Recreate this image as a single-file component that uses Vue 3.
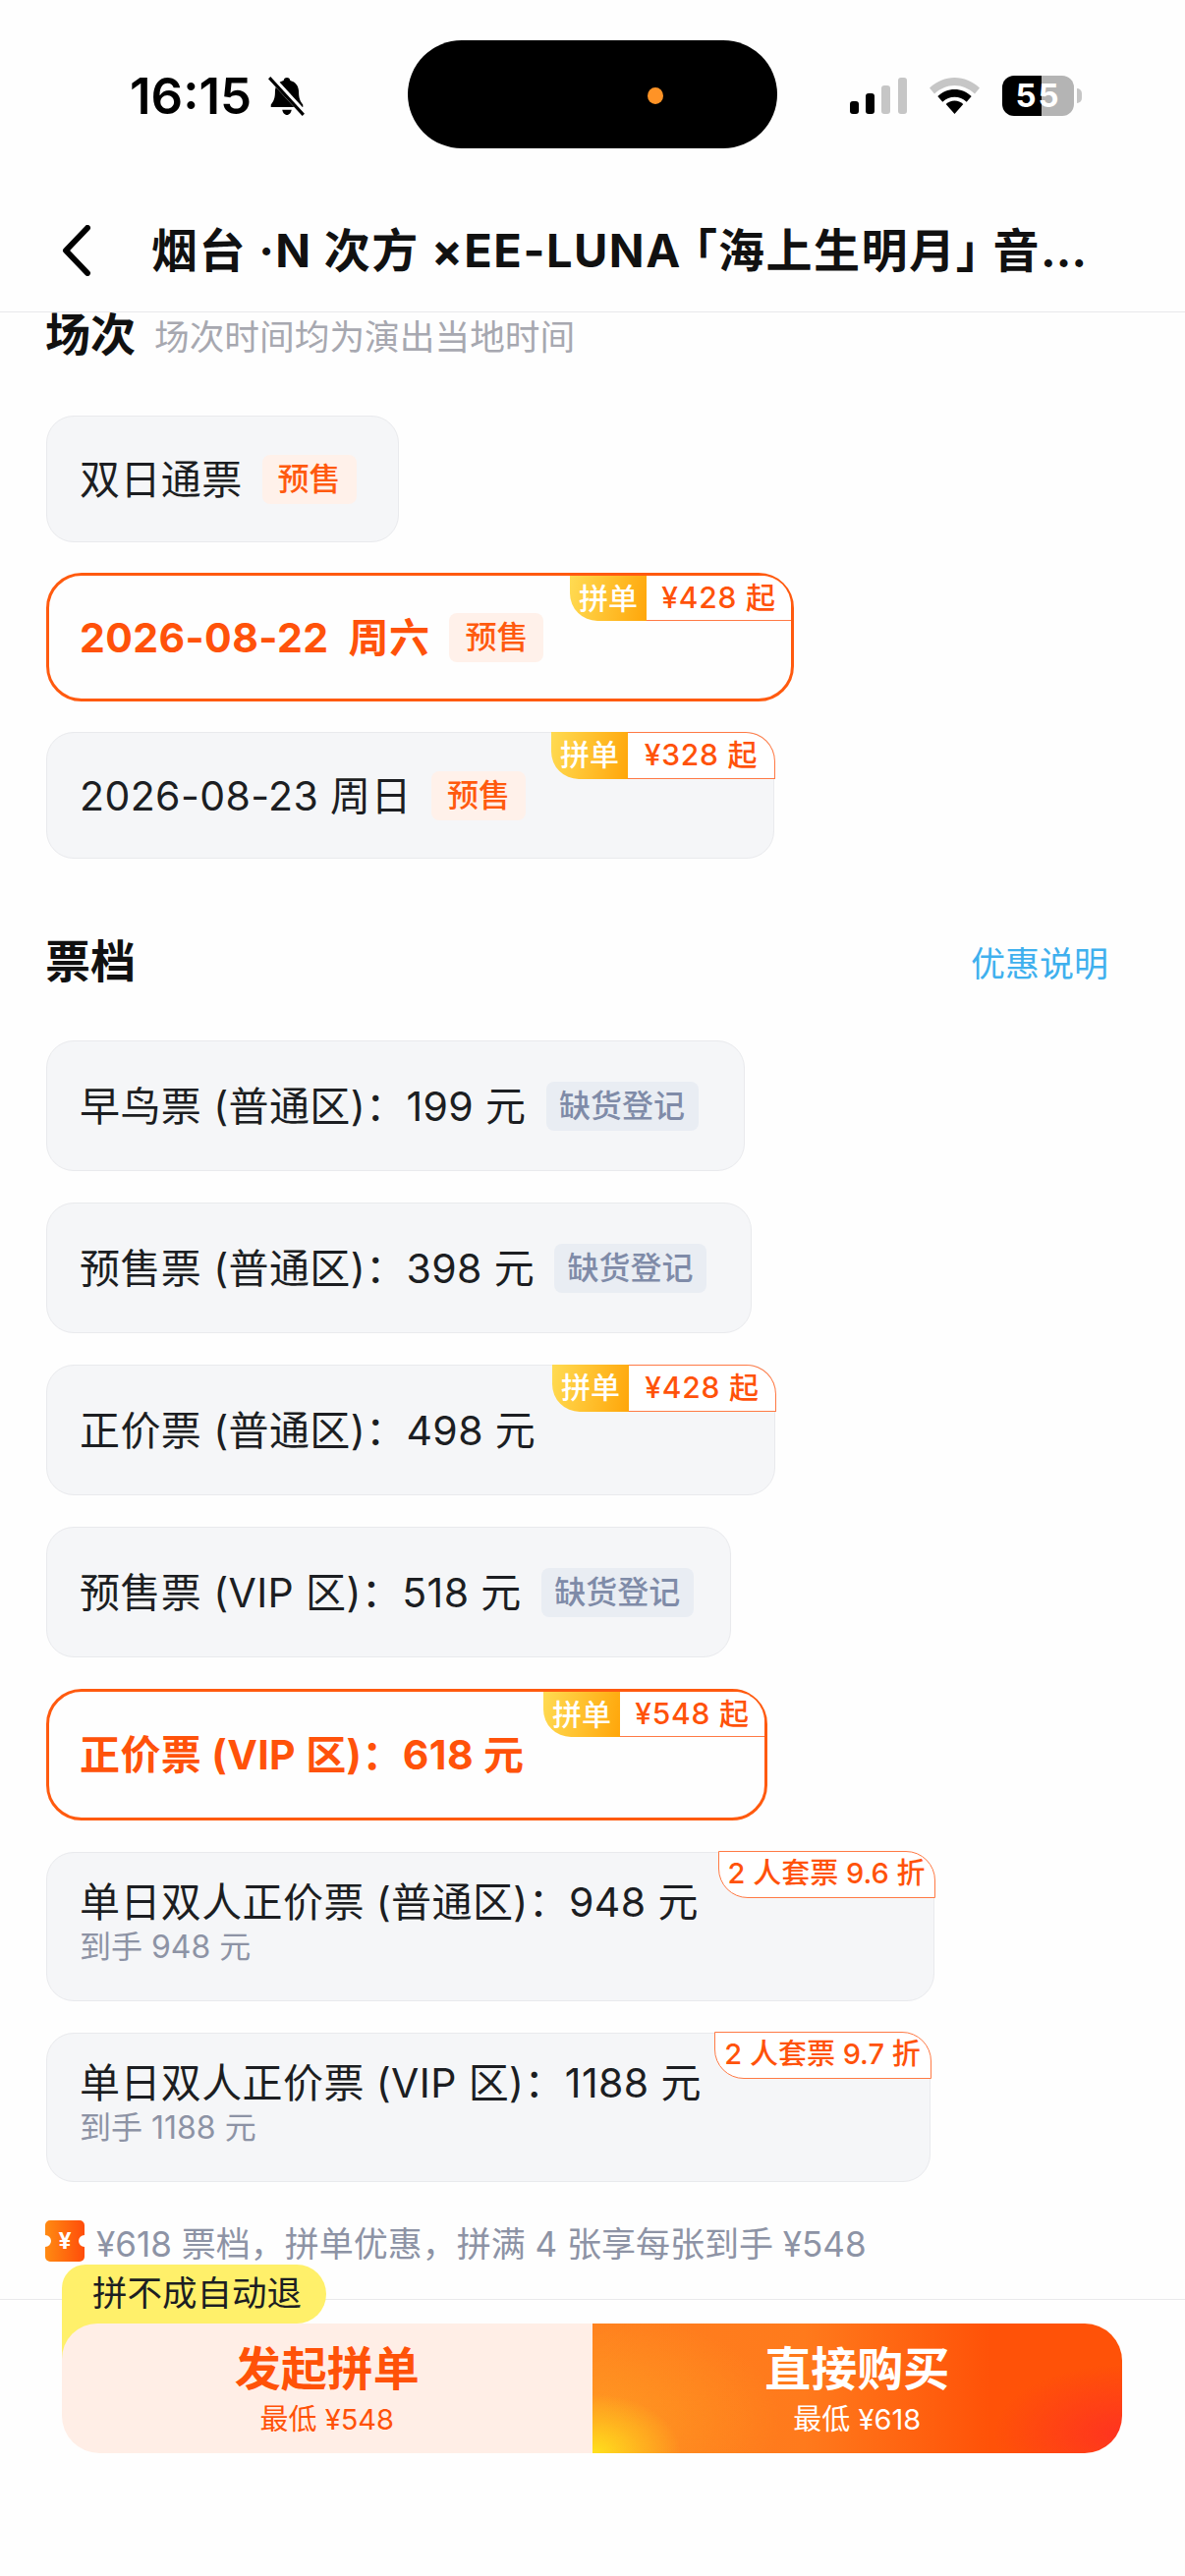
<script setup>
const sessions = [
  { name: '双日通票', width: 359, badge: '预售' },
  { name: '2026-08-22  周六', width: 761, badge: '预售', selected: true, join: '¥428 起' },
  { name: '2026-08-23 周日', width: 741, badge: '预售', join: '¥328 起' },
]
const tickets = [
  { name: '早鸟票 (普通区)：199 元', width: 711, badge: '缺货登记' },
  { name: '预售票 (普通区)：398 元', width: 718, badge: '缺货登记' },
  { name: '正价票 (普通区)：498 元', width: 742, join: '¥428 起' },
  { name: '预售票 (VIP 区)：518 元', width: 697, badge: '缺货登记' },
  { name: '正价票 (VIP 区)：618 元', width: 734, selected: true, join: '¥548 起' },
  { name: '单日双人正价票 (普通区)：948 元', width: 904, sub: '到手 948 元', pack: '2 人套票 9.6 折' },
  { name: '单日双人正价票 (VIP 区)：1188 元', width: 900, sub: '到手 1188 元', pack: '2 人套票 9.7 折' },
]
</script>

<template>
  <div class="page">
    <header class="top">
      <div class="status">
        <div class="status-left">
          <span class="time">16:15</span>
          <svg class="bell" viewBox="0 0 40 40" width="42" height="42">
            <path d="M20 2c1.800 0 3 1.200 3.200 2.800C28.600 6 31.500 10.500 31.500 16c0 6 1.500 9 4 12v2.500H4.500V28c2.500-3 4-6 4-12 0-5.500 2.900-10 8.300-11.200C17 3.200 18.200 2 20 2z" fill="#000"/>
            <path d="M15.500 33h9c-.4 2.800-2.200 5-4.500 5s-4.100-2.200-4.500-5z" fill="#000"/>
            <path d="M4 1l33 36" stroke="#fff" stroke-width="6"/>
            <path d="M3 2l33 36" stroke="#000" stroke-width="3"/>
          </svg>
        </div>
        <div class="island"><i class="dot"></i></div>
        <div class="status-right">
          <svg width="58" height="37" viewBox="0 0 58 37">
            <rect x="0" y="24" width="9" height="13" rx="3" fill="#000"/>
            <rect x="16" y="16" width="9" height="21" rx="3" fill="#000"/>
            <rect x="32" y="8" width="9" height="29" rx="3" fill="#c6c6c6"/>
            <rect x="49" y="0" width="9" height="37" rx="3" fill="#c6c6c6"/>
          </svg>
          <svg width="51" height="37" viewBox="0 0 51 37">
            <path d="M25.500 0C16 0 7.500 3.600 0 10.500l5 6C11 11 18 8 25.500 8S40 11 46 16.500l5-6C43.500 3.600 35 0 25.500 0z" fill="#c6c6c6"/>
            <path d="M25.500 12c-6.500 0-12.300 2.500-17.200 7l5 5.800c3.500-3.200 7.700-5 12.200-5s8.700 1.800 12.200 5l5-5.800c-4.900-4.500-10.700-7-17.200-7z" fill="#000"/>
            <path d="M25.500 23.500c-3.400 0-6.400 1.300-8.800 3.400L25.500 37l8.800-10.100c-2.400-2.100-5.400-3.400-8.800-3.400z" fill="#000"/>
          </svg>
          <div class="battery">
            <span class="batt-text">55</span>
            <i class="batt-nub"></i>
          </div>
        </div>
      </div>
      <div class="nav">
        <svg class="back" width="32" height="52" viewBox="0 0 32 52">
          <path d="M27 3L5 26l22 23" fill="none" stroke="#000" stroke-width="6" stroke-linecap="round" stroke-linejoin="round"/>
        </svg>
        <h1 class="nav-title">烟台 ·N 次方 ×EE-LUNA 「海上生明月」 音乐节</h1>
      </div>
    </header>

    <main class="content">
      <div class="sec-head">
        <h2 class="sec-title">场次</h2>
        <span class="sec-sub">场次时间均为演出当地时间</span>
      </div>
      <div class="list sessions">
        <div
          v-for="s in sessions"
          :key="s.name"
          class="card session"
          :class="{ selected: s.selected }"
          :style="{ width: s.width + 'px' }"
        >
          <span class="label">{{ s.name }}</span>
          <span class="badge sale">{{ s.badge }}</span>
          <div v-if="s.join" class="tag">
            <span class="tag-join">拼单</span>
            <span class="tag-price">{{ s.join }}</span>
          </div>
        </div>
      </div>

      <div class="sec-head tickets-head">
        <h2 class="sec-title">票档</h2>
        <a class="sec-link">优惠说明</a>
      </div>
      <div class="list">
        <div
          v-for="t in tickets"
          :key="t.name"
          class="card ticket"
          :class="{ selected: t.selected, double: t.sub }"
          :style="{ width: t.width + 'px' }"
        >
          <div class="label-wrap">
            <span class="label">{{ t.name }}</span>
            <span v-if="t.sub" class="sub">{{ t.sub }}</span>
          </div>
          <span v-if="t.badge" class="badge gray">{{ t.badge }}</span>
          <div v-if="t.join" class="tag">
            <span class="tag-join">拼单</span>
            <span class="tag-price">{{ t.join }}</span>
          </div>
          <div v-if="t.pack" class="tag-pack">{{ t.pack }}</div>
        </div>
      </div>

      <div class="note">
        <svg class="note-icon" width="42" height="42" viewBox="0 0 42 42">
          <defs>
            <linearGradient id="tk" x1="0" y1="0" x2="1" y2="0">
              <stop offset="0" stop-color="#ff8a12"/>
              <stop offset="1" stop-color="#ff4d0a"/>
            </linearGradient>
          </defs>
          <path d="M6 0h30a5 5 0 0 1 5 5v10a6 6 0 0 0 0 12v10a5 5 0 0 1-5 5H6a5 5 0 0 1-5-5V27a6 6 0 0 0 0-12V5a5 5 0 0 1 5-5z" fill="url(#tk)"/>
          <text x="21" y="29" text-anchor="middle" font-size="23" font-weight="700" fill="#fff" font-family="Inter, sans-serif">¥</text>
        </svg>
        <span>¥618 票档，拼单优惠，拼满 4 张享每张到手 ¥548</span>
      </div>
    </main>

    <footer class="foot">
      <div class="actions">
        <div class="hint">拼不成自动退</div>
        <i class="hint-tail"></i>
        <button class="btn btn-left">
          <span class="btn-main">发起拼单</span>
          <span class="btn-sub">最低 ¥548</span>
        </button>
        <button class="btn btn-right">
          <span class="btn-main">直接购买</span>
          <span class="btn-sub">最低 ¥618</span>
        </button>
      </div>
    </footer>
  </div>
</template>

<style>
html, body { margin: 0; padding: 0; background: #fefefe; }
</style>

<style scoped>
.page {
  width: 1206px;
  height: 2622px;
  display: flex;
  flex-direction: column;
  overflow: hidden;
  background: #fefefe;
  color: #1c1e22;
  font-family: Inter, "Noto Sans CJK SC", sans-serif;
}
.top { height: 318px; flex: none; border-bottom: 1.5px solid #e9e9eb; box-sizing: border-box; display: flex; flex-direction: column; }
.status { height: 193px; flex: none; display: flex; align-items: flex-start; position: relative; }
.status-left { display: flex; align-items: center; gap: 15px; margin: 77px 0 0 132px; width: 283px; height: 42px; }
.time { font-size: 51px; font-weight: 600; line-height: 42px; color: #000; }
.island { width: 376px; height: 110px; margin-top: 41px; border-radius: 55px; background: #000; position: relative; flex: none; }
.dot { position: absolute; left: 244px; top: 48px; width: 16px; height: 17px; border-radius: 50%; background: #ff9326; }
.status-right { display: flex; align-items: center; margin: 78px 0 0 74px; gap: 23px; height: 38px; }
.battery { width: 73px; height: 41px; border-radius: 12px; background: linear-gradient(90deg, #000 55%, #b4b4b4 55%); position: relative; text-align: center; }
.batt-text { font-size: 33px; line-height: 41px; font-weight: 700; color: #fff; display: block; letter-spacing: 2px; }
.batt-nub { position: absolute; right: -8px; top: 13px; width: 5px; height: 15px; border-radius: 0 5px 5px 0; background: #c6c6c6; }
.nav { height: 124px; display: flex; align-items: center; padding: 0 88px 0 62px; gap: 60px; }
.back { flex: none; }
.nav-title { margin: 0; flex: 1; min-width: 0; font-size: 47px; font-weight: 700; line-height: 60px; color: #111; white-space: nowrap; overflow: hidden; text-overflow: ellipsis; letter-spacing: 1.5px; word-spacing: -0.5px; font-feature-settings: "palt"; }

.content { flex: 1; min-height: 0; padding: 0 47px; overflow: hidden; display: flex; flex-direction: column; }
.sec-head { height: 60px; display: flex; align-items: center; margin-top: -8px; margin-bottom: 53px; flex: none; gap: 19px; }
.tickets-head { margin-top: 74px; margin-bottom: 51px; justify-content: space-between; padding-right: 31px; }
.sec-title { margin: 0 0 0 -1px; font-size: 46px; font-weight: 700; color: #111; line-height: 60px; }
.sec-sub { font-size: 35.7px; color: #a7a8b0; }
.sec-link { font-size: 35px; color: #3fb0ee; }
.list { display: flex; flex-direction: column; align-items: flex-start; gap: 32px; }
.sessions { gap: 31px; }

.card { position: relative; box-sizing: border-box; display: flex; align-items: center; gap: 20px; padding-left: 33px; background: #f5f6f8; border: 1.5px solid #e9eaed; border-radius: 28px; flex: none; }
.session { height: 129px; }
.ticket { height: 133px; }
.double { height: 152px; }
.double .label-wrap { padding-bottom: 7px; }
.selected { background: #fefefe; border: 3px solid #ff5a0f; border-radius: 36px; color: #ff520a; }
.session.selected { height: 131px; padding-left: 31px; }
.ticket.selected { height: 134px; padding-left: 31px; }
.selected .label { font-weight: 700; }

.label-wrap { display: flex; flex-direction: column; }
.label { font-size: 41px; line-height: 48px; white-space: pre; letter-spacing: 0.4px; }
.sub { font-size: 32px; line-height: 44px; color: #8d93a5; }

.badge { flex: none; height: 50px; padding: 0 16px; box-sizing: border-box; line-height: 50px; font-size: 32px; font-weight: 500; border-radius: 8px; }
.sale { background: #fff1ea; color: #ff5a0f; }
.gray { padding: 0 13.5px; background: #e9edf3; color: #7f8ba8; }

.tag { position: absolute; top: -1.5px; right: -2px; display: flex; height: 48px; }
.selected .tag { top: 0; right: 0; height: 46px; }
.tag-join { width: 78px; box-sizing: border-box; text-align: center; font-size: 30px; line-height: 46px; font-weight: 500; color: #fff; background: linear-gradient(100deg, #ffdb52, #ffa60a); border-bottom-left-radius: 28px; }
.tag-price { width: 150px; box-sizing: border-box; text-align: center; font-size: 30px; line-height: 44px; font-weight: 500; letter-spacing: 0.8px; color: #ff520a; background: #fff; border: 1.5px solid #ff7a45; border-left: none; border-top-right-radius: 30px; white-space: nowrap; }
.selected .tag-price { width: 147px; border-top: none; border-right: none; }
.tag-pack { position: absolute; top: -2px; right: -1.5px; width: 221px; height: 48px; box-sizing: border-box; text-align: center; line-height: 44px; font-size: 29px; font-weight: 500; white-space: nowrap; color: #ff520a; background: #fff; border: 1.5px solid #ff7a45; border-radius: 0 30px 0 30px; }

.note { margin: 39px 0 0 -2px; height: 42px; display: flex; align-items: center; gap: 11px; font-size: 35px; color: #8d93a5; white-space: nowrap; flex: none; }
.note-icon { flex: none; }

.foot { height: 282px; flex: none; box-sizing: border-box; border-top: 1.5px solid #e9e9eb; padding: 24px 64px 0 63px; }
.actions { position: relative; display: flex; height: 132px; }
.hint { position: absolute; left: 0; bottom: 100%; height: 60px; padding: 0 25px 0 31px; line-height: 60px; font-size: 35.5px; color: #1c1e22; background: #fff06a; border-radius: 24px 30px 30px 0; white-space: nowrap; }
.hint-tail { position: absolute; left: 0; top: 0; width: 60px; height: 60px; background: #fff06a; }
.btn { position: relative; border: 0; padding: 0; margin: 0; flex: 1; display: flex; flex-direction: column; align-items: center; font-family: inherit; }
.btn-left { background: #ffeee6; color: #ff5208; border-radius: 36px 0 0 38px; }
.btn-right { color: #fff; border-radius: 0 38px 38px 0; background:
  radial-gradient(ellipse 90px 60px at 0 100%, #ffe11c 0%, rgba(255, 190, 30, 0.75) 55%, rgba(255, 160, 30, 0) 100%),
  radial-gradient(ellipse 190px 110px at 0 75%, rgba(255, 160, 35, 0.8) 0%, rgba(255, 150, 30, 0) 100%),
  radial-gradient(ellipse 130px 70px at 100% 85%, #ff3320 0%, rgba(255, 60, 20, 0) 100%),
  linear-gradient(90deg, #ff7f1e 0%, #ff7a1c 40%, #ff5208 75%, #ff5208 100%); }
.btn-main { font-size: 47px; font-weight: 700; line-height: 60px; margin-top: 16px; }
.btn-sub { font-size: 29px; line-height: 38px; margin-top: 3px; }
</style>
